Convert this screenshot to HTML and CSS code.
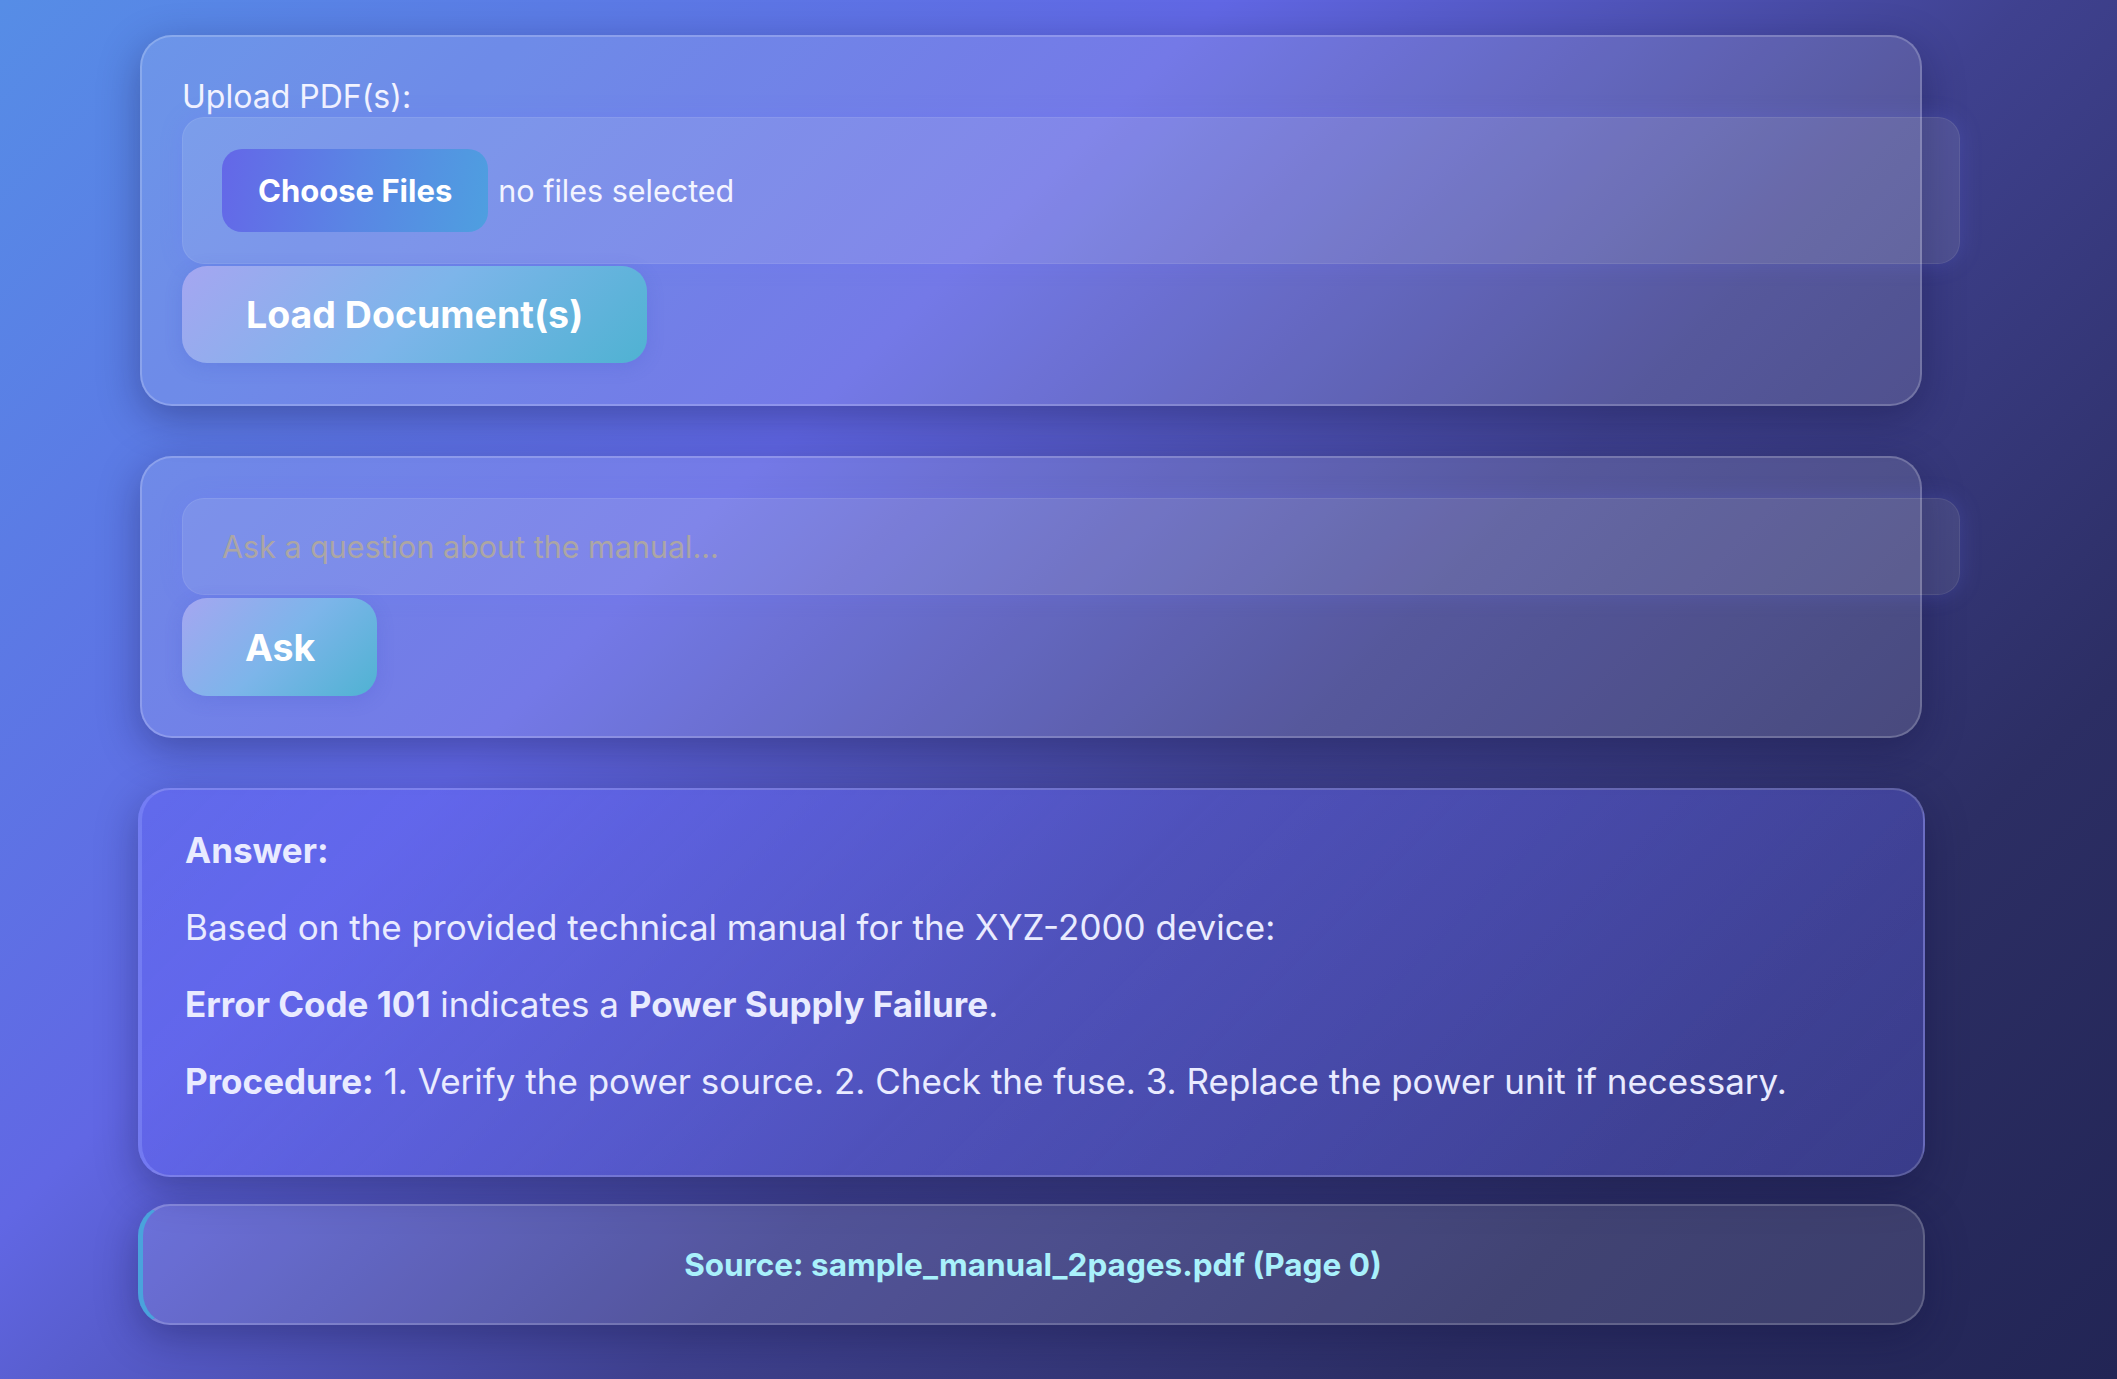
FILE: index.html
```html
<!DOCTYPE html>
<html lang="en">
<head>
<meta charset="utf-8">
<title>Manual Assistant</title>
<link rel="stylesheet" href="styles.css">
</head>
<body>
<main class="page">
  <section class="card upload-card">
    <label class="field-label" for="pdfs">Upload PDF(s):</label>
    <div class="file-field" id="pdfs">
      <span class="file-btn">Choose Files</span>
      <span class="file-status">no files selected</span>
    </div>
    <button class="action-btn" type="button">Load Document(s)</button>
  </section>

  <section class="card ask-card">
    <input class="question" type="text" placeholder="Ask a question about the manual...">
    <button class="action-btn" type="button">Ask</button>
  </section>

  <section class="answer-card">
    <p class="answer-line"><strong>Answer:</strong></p>
    <p class="answer-line">Based on the provided technical manual for the XYZ-2000 device:</p>
    <p class="answer-line"><strong>Error Code 101</strong> indicates a <strong>Power Supply Failure</strong>.</p>
    <p class="answer-line"><strong>Procedure:</strong> 1. Verify the power source. 2. Check the fuse. 3. Replace the power unit if necessary.</p>
  </section>

  <section class="source-card">
    <span class="source-text">Source: sample_manual_2pages.pdf (Page 0)</span>
  </section>
</main>
</body>
</html>
```
FILE: styles.css
```css
* {
  box-sizing: border-box;
}

html, body {
  margin: 0;
  padding: 0;
}

body {
  min-height: 100vh;
  font-family: "Inter", "Noto Sans", "Liberation Sans", sans-serif;
  color: #eef0ff;
  background: linear-gradient(135deg, #568de6 0%, #6167e4 35%, #3f418f 58%, #2c2e64 80%, #222555 100%);
  overflow: hidden;
}

.page {
  width: 1782px;
  margin-left: 140px;
  padding-top: 35px;
  display: flex;
  flex-direction: column;
}

.card {
  display: flex;
  flex-direction: column;
  align-items: flex-start;
  background: rgba(255, 255, 255, 0.12);
  border: 2px solid rgba(255, 255, 255, 0.2);
  border-radius: 32px;
  padding: 40px;
  box-shadow: 0 12px 40px rgba(15, 15, 60, 0.35);
  margin-bottom: 50px;
}

.upload-card {
  padding-bottom: 41px;
}

.field-label {
  display: block;
  font-size: 32px;
  line-height: 40px;
  color: #f2f3ff;
}

.file-field {
  box-sizing: content-box;
  width: 100%;
  height: 83px;
  padding: 31px 39px;
  display: flex;
  align-items: center;
  gap: 10px;
  background: rgba(255, 255, 255, 0.1);
  border: 1px solid rgba(255, 255, 255, 0.08);
  border-radius: 22px;
  box-shadow: 0 0 22px rgba(110, 120, 255, 0.22);
}

.file-btn {
  height: 83px;
  padding: 0 36px;
  display: flex;
  align-items: center;
  font-size: 31px;
  font-weight: 700;
  color: #ffffff;
  background: linear-gradient(100deg, #6467e8 0%, #5a85e4 50%, #4e9fe0 100%);
  border-radius: 20px;
}

.file-status {
  font-size: 30.5px;
  color: #f3f4ff;
}

.action-btn {
  height: 97px;
  padding: 0 64px;
  margin-top: 2px;
  border: none;
  border-radius: 25px;
  font-family: inherit;
  font-size: 37.5px;
  font-weight: 700;
  color: #ffffff;
  background: linear-gradient(135deg, #a5a6f1 0%, #7db5ea 50%, #4fb2d2 100%);
  box-shadow: 0 4px 18px rgba(60, 80, 200, 0.18);
}

.ask-card .action-btn {
  height: 98px;
  margin-top: 3px;
  padding: 0 62px 0 63px;
}

.question {
  box-sizing: content-box;
  width: 100%;
  height: 95px;
  padding: 0 39px;
  margin: 0;
  font-family: inherit;
  font-size: 30.5px;
  color: #ffffff;
  background: rgba(255, 255, 255, 0.09);
  border: 1px solid rgba(255, 255, 255, 0.08);
  border-radius: 22px;
  outline: none;
  box-shadow: 0 0 22px rgba(110, 120, 255, 0.22);
}

.question::placeholder {
  color: #aca6a4;
  opacity: 1;
}

.answer-card {
  margin: 0 -3px 27px -2px;
  padding: 36px 45px 41px 43px;
  background: linear-gradient(135deg, rgba(99, 102, 241, 0.58) 0%, rgba(99, 102, 241, 0.3) 100%);
  border: 2px solid rgba(255, 255, 255, 0.18);
  border-left: 4px solid rgba(140, 150, 255, 0.45);
  border-radius: 32px;
  box-shadow: 0 12px 40px rgba(15, 15, 60, 0.35);
}

.answer-line {
  margin: 0 0 29px 0;
  font-size: 35px;
  line-height: 48px;
  color: #e9ebff;
}

.answer-line strong {
  font-weight: 700;
}

.source-card {
  margin: 0 -3px 0 -2px;
  height: 121px;
  display: flex;
  align-items: center;
  justify-content: center;
  background: rgba(255, 255, 255, 0.1);
  border: 2px solid rgba(255, 255, 255, 0.18);
  border-left: 5px solid #4aa3dc;
  border-radius: 32px;
  box-shadow: 0 12px 40px rgba(15, 15, 60, 0.35);
}

.source-text {
  font-size: 31.5px;
  font-weight: 700;
  color: #a9f1fb;
}
```
